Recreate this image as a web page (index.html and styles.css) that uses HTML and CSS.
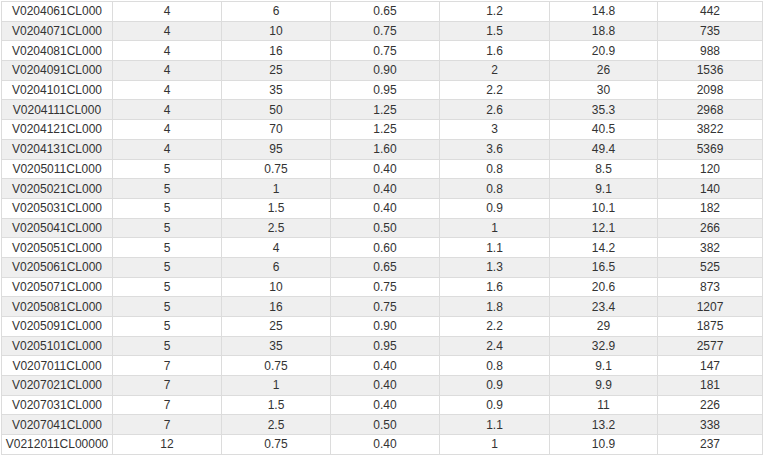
FILE: index.html
```html
<!DOCTYPE html>
<html>
<head>
<meta charset="utf-8">
<link rel="stylesheet" href="styles.css">
</head>
<body>
<table class="spec">
<colgroup>
<col class="c1"><col class="c2"><col class="c3"><col class="c4"><col class="c5"><col class="c6"><col class="c7">
</colgroup>
<tbody>
<tr><td>V0204061CL000</td><td>4</td><td>6</td><td>0.65</td><td>1.2</td><td>14.8</td><td>442</td></tr>
<tr><td>V0204071CL000</td><td>4</td><td>10</td><td>0.75</td><td>1.5</td><td>18.8</td><td>735</td></tr>
<tr><td>V0204081CL000</td><td>4</td><td>16</td><td>0.75</td><td>1.6</td><td>20.9</td><td>988</td></tr>
<tr><td>V0204091CL000</td><td>4</td><td>25</td><td>0.90</td><td>2</td><td>26</td><td>1536</td></tr>
<tr><td>V0204101CL000</td><td>4</td><td>35</td><td>0.95</td><td>2.2</td><td>30</td><td>2098</td></tr>
<tr><td>V0204111CL000</td><td>4</td><td>50</td><td>1.25</td><td>2.6</td><td>35.3</td><td>2968</td></tr>
<tr><td>V0204121CL000</td><td>4</td><td>70</td><td>1.25</td><td>3</td><td>40.5</td><td>3822</td></tr>
<tr><td>V0204131CL000</td><td>4</td><td>95</td><td>1.60</td><td>3.6</td><td>49.4</td><td>5369</td></tr>
<tr><td>V0205011CL000</td><td>5</td><td>0.75</td><td>0.40</td><td>0.8</td><td>8.5</td><td>120</td></tr>
<tr><td>V0205021CL000</td><td>5</td><td>1</td><td>0.40</td><td>0.8</td><td>9.1</td><td>140</td></tr>
<tr><td>V0205031CL000</td><td>5</td><td>1.5</td><td>0.40</td><td>0.9</td><td>10.1</td><td>182</td></tr>
<tr><td>V0205041CL000</td><td>5</td><td>2.5</td><td>0.50</td><td>1</td><td>12.1</td><td>266</td></tr>
<tr><td>V0205051CL000</td><td>5</td><td>4</td><td>0.60</td><td>1.1</td><td>14.2</td><td>382</td></tr>
<tr><td>V0205061CL000</td><td>5</td><td>6</td><td>0.65</td><td>1.3</td><td>16.5</td><td>525</td></tr>
<tr><td>V0205071CL000</td><td>5</td><td>10</td><td>0.75</td><td>1.6</td><td>20.6</td><td>873</td></tr>
<tr><td>V0205081CL000</td><td>5</td><td>16</td><td>0.75</td><td>1.8</td><td>23.4</td><td>1207</td></tr>
<tr><td>V0205091CL000</td><td>5</td><td>25</td><td>0.90</td><td>2.2</td><td>29</td><td>1875</td></tr>
<tr><td>V0205101CL000</td><td>5</td><td>35</td><td>0.95</td><td>2.4</td><td>32.9</td><td>2577</td></tr>
<tr><td>V0207011CL000</td><td>7</td><td>0.75</td><td>0.40</td><td>0.8</td><td>9.1</td><td>147</td></tr>
<tr><td>V0207021CL000</td><td>7</td><td>1</td><td>0.40</td><td>0.9</td><td>9.9</td><td>181</td></tr>
<tr><td>V0207031CL000</td><td>7</td><td>1.5</td><td>0.40</td><td>0.9</td><td>11</td><td>226</td></tr>
<tr><td>V0207041CL000</td><td>7</td><td>2.5</td><td>0.50</td><td>1.1</td><td>13.2</td><td>338</td></tr>
<tr><td>V0212011CL00000</td><td>12</td><td>0.75</td><td>0.40</td><td>1</td><td>10.9</td><td>237</td></tr>
</tbody>
</table>
</body>
</html>
```
FILE: styles.css
```css
html, body {
  margin: 0;
  padding: 0;
  background: #ffffff;
}
body {
  padding: 1px 0 0 1px;
  font-family: "Liberation Sans", Arial, sans-serif;
  font-size: 12px;
  color: #333333;
}
.spec {
  border-collapse: collapse;
  table-layout: fixed;
  width: 761px;
}
.c1 { width: 111px; }
.c2 { width: 109px; }
.c3 { width: 109px; }
.c4 { width: 109px; }
.c5 { width: 110px; }
.c6 { width: 108px; }
.c7 { width: 105px; }
.spec tr {
  height: 19.7px;
}
.spec td {
  border: 1px solid #dcdcdc;
  padding: 0;
  text-align: center;
  line-height: 14px;
  white-space: nowrap;
}
.spec tr:nth-child(even) td {
  background: #efefef;
}
```
